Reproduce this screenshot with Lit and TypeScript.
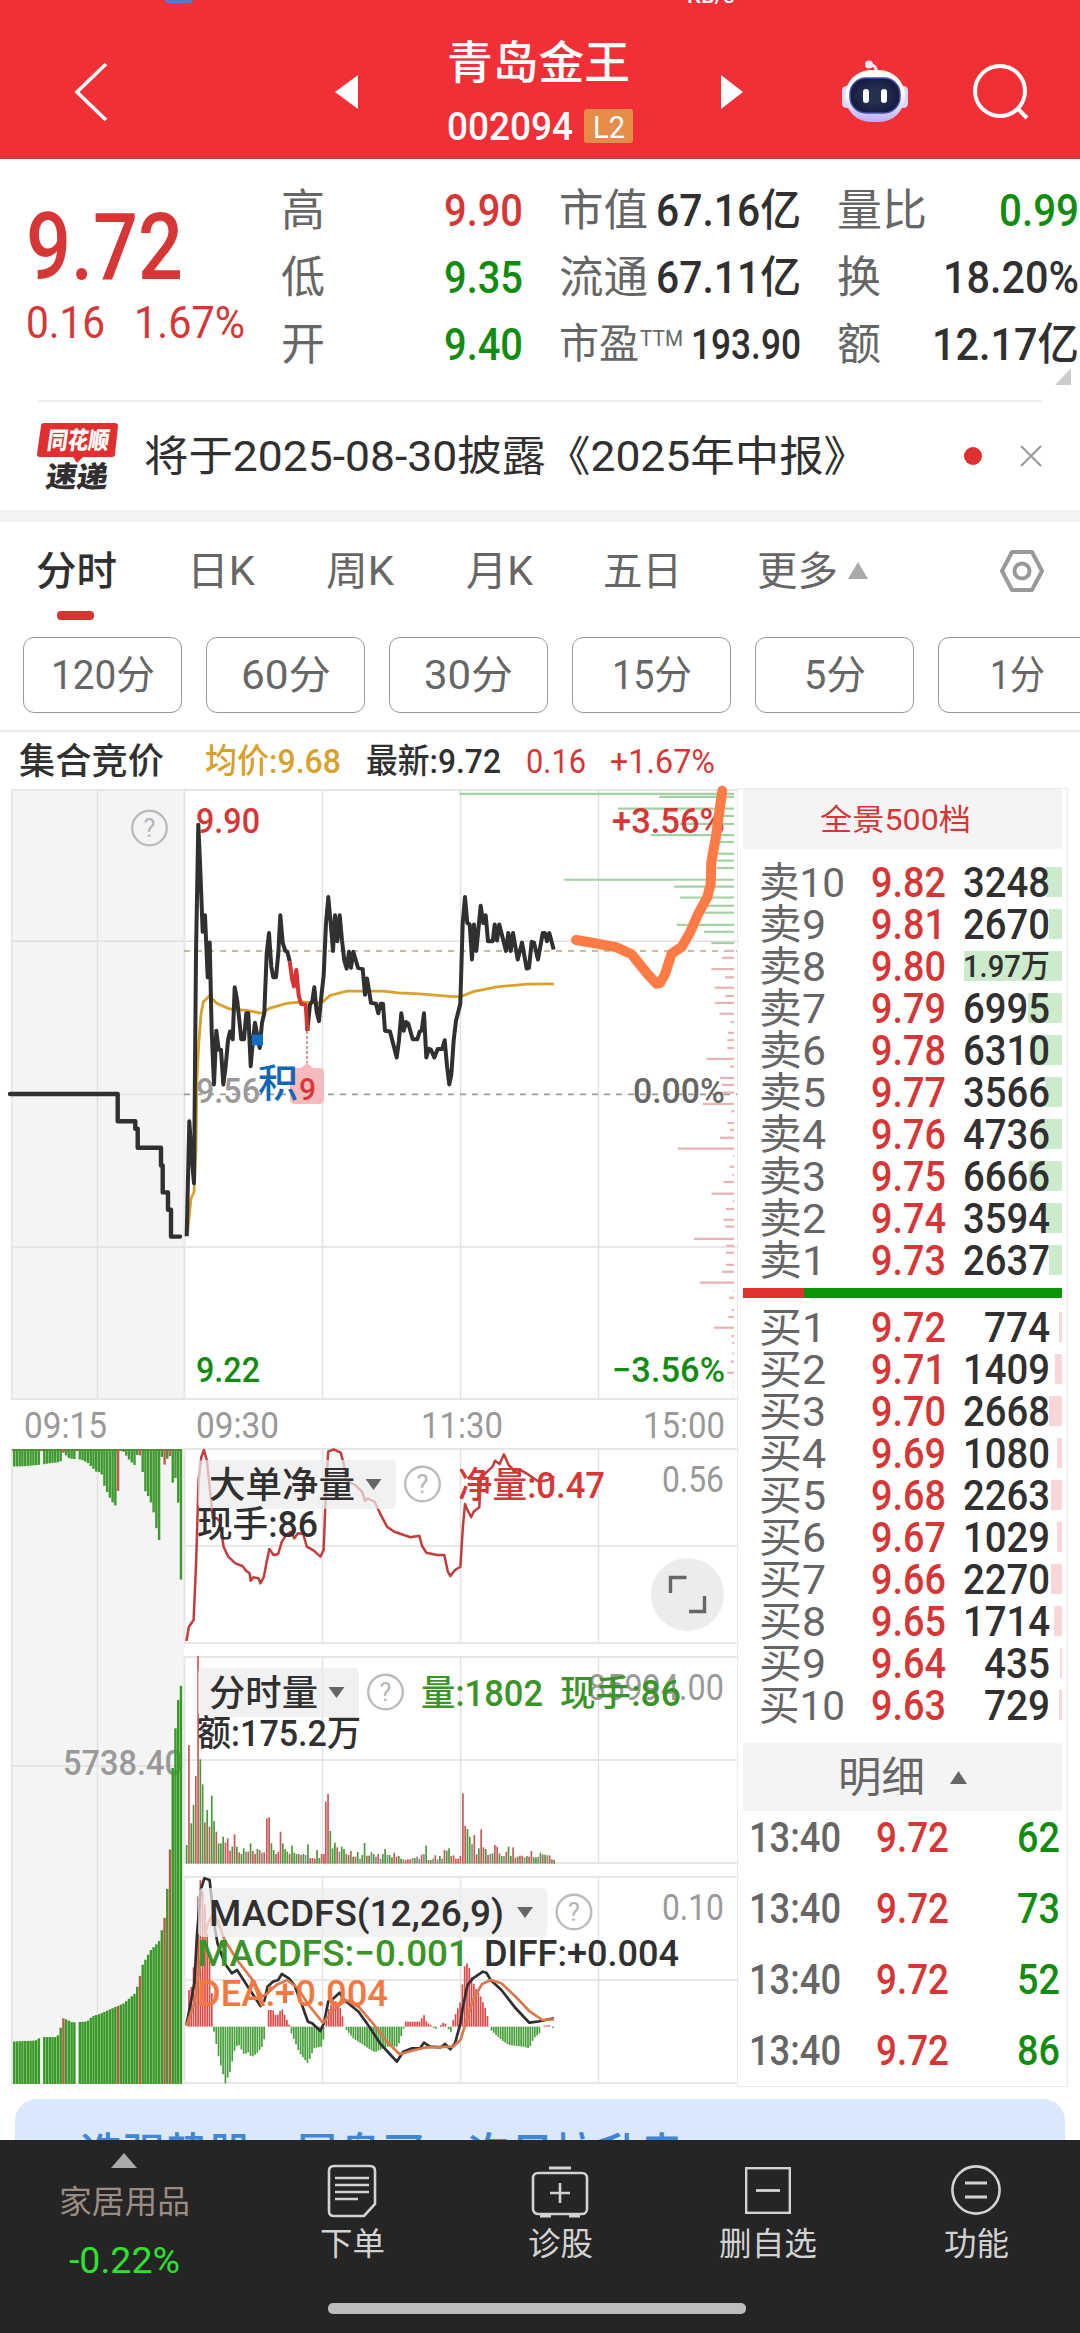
import { LitElement, html, svg, css } from "lit"
import { customElement } from "lit/decorators.js"

type Box = { ox: number, oy: number, kx: number, ky: number }

// chart plotting spaces, each one maps its own units to page units
const PRICE: Box = { ox: 0, oy: 780, kx: 3, ky: 2.306 }
const CALL: Box = { ox: 0, oy: 1430, kx: 3, ky: 2.306 }
const NET: Box = { ox: 180, oy: 1430, kx: 2.8, ky: 3 }
const VOL: Box = { ox: 180, oy: 1650, kx: 2.8, ky: 3 }

const PRICE_A = "560,1052 568,787 575,870 582,930 588,400 595,103 600,190 608,350 615,312 623,455 629,375 635,580 642,702 649,578 656,622 663,622 670,702 677,660 684,600 690,580 698,598 704,478 712,510 724,598 732,598 739,538 745,538 752,660 759,598 765,560 779,618 786,560 793,538 800,400 807,353 814,430 820,455 828,455 835,400 841,312 848,375 856,394 862,396 869,418"
const PRICE_RED = "869,418 876,458 882,476 889,438 896,497 903,516 917,518 922,578"
const PRICE_B = "922,578 930,518 937,510 943,478 950,535 957,556 964,500 971,450 978,330 985,270 992,330 999,394 1005,312 1012,372 1019,312 1026,370 1033,416 1040,435 1047,396 1053,433 1060,396 1074,433 1088,436 1095,495 1101,458 1113,514 1128,516 1135,538 1142,516 1149,516 1155,578 1170,580 1190,640 1197,600 1204,538 1211,578 1218,558 1225,562 1238,598 1252,598 1259,580 1265,578 1272,538 1279,640 1286,620 1293,622 1303,640 1313,620 1327,620 1334,600 1341,660 1348,702 1354,680 1361,600 1368,555 1381,516 1388,330 1395,270 1402,330 1409,333 1416,414 1422,333 1429,394 1442,290 1450,330 1457,312 1464,372 1478,372 1484,333 1491,370 1498,333 1518,394 1525,353 1532,394 1539,353 1553,414 1566,375 1580,435 1587,433 1595,373 1602,375 1614,414 1628,353 1635,353 1641,372 1648,353 1661,391"
const AVERAGE = "562,1050 573,965 582,950 588,850 590,700 597,600 603,540 610,512 628,498 650,515 690,528 740,531 785,538 810,526 860,515 900,512 965,514 990,497 1040,487 1150,487 1195,491 1260,493 1350,499 1381,500 1420,488 1490,477 1580,471 1661,470"
const AUCTION = "30,724 353,724 353,787 406,787 406,804 413,804 413,848 483,848 483,889 488,889 488,951 504,951 504,991 513,991 513,1053 540,1053"
const SKETCH = "1728,369 1790,377 1850,386 1895,402 1940,445 1970,470 1980,468 1995,448 2015,400 2045,385 2070,352 2095,308 2122,270 2132,240 2134,190 2148,130 2155,90 2167,25"
const ASK_DEPTH = "268,32 868,39 744,66 1040,83 930,101 842,127 1040,143 1040,170 1040,186 1040,203 581,230 912,246 930,271 1010,290 990,306 920,334 1002,350 1024,376"
const BID_DEPTH = "1070,394 1056,410 1024,436 1065,455 1034,479 1066,498 1034,514 1048,539 1082,558 1074,583 1072,600 1072,618 1009,643 1081,661 1050,687 1056,703 1049,721 998,747 1084,764 1072,791 1080,807 1050,825 924,850 1089,867 1078,892 1087,911 1060,927 1024,954 1089,971 1068,989 1061,1014 1066,1030 972,1058 1069,1074 1068,1090 1068,1118 1056,1134 990,1159 1090,1178 1077,1194 1086,1222 1075,1238 1032,1263 1084,1282 1087,1298 1087,1323 1083,1341 1072,1367 1090,1387 1090,1403 1090,1419"

const CALL_TOP = "38,84 60,84 120,80 150,76 178,74 183,50 205,66 240,68 260,76 285,96 300,98 310,130 325,155 335,168 350,180 352,48 365,48 385,70 402,82 405,50 412,68 420,50 428,135 445,158 455,180 465,225 479,272 482,47 492,88 500,60 508,60 515,125 520,100 530,138 537,345"
const CALL_BOTTOM = "38,1410 105,1408 120,1400 170,1400 180,1380 186,1356 200,1360 215,1366 260,1364 275,1352 300,1346 340,1332 370,1322 405,1298 415,1270 425,1235 450,1200 475,1180 485,1150 492,1125 499,1068 507,1003 515,800 522,710 529,655 537,590"

const NET_LINE = "18,633 25,590 38,570 45,400 52,150 60,80 67,60 75,90 83,170 92,265 103,265 112,275 122,350 135,380 155,400 175,408 185,422 195,430 198,452 205,442 220,445 225,460 235,440 242,400 250,357 262,375 275,372 285,335 297,315 310,305 320,325 330,310 345,312 355,350 375,362 393,380 402,360 408,200 415,65 430,58 450,68 458,100 465,150 490,165 510,185 518,213 525,205 545,215 560,250 580,290 600,305 645,322 670,317 678,348 690,368 720,375 740,375 750,425 757,438 770,420 785,410 792,290 798,222 805,240 815,262 822,245 838,232 842,150 855,130 875,110 882,92 895,102 907,73 920,105 930,115 935,125 950,118 970,130 990,145 1005,155 1030,150 1048,140"

const VOLUME = [
	{ x: 18.5, tops: [585, 285, 520, 465, 378, 18, 328, 403, 517, 480, 530, 437, 513, 545, 580, 580, 560, 578, 565, 602, 590, 553, 590, 607, 612, 595, 605, 605, 580, 603, 612, 597, 600, 608, 607], color: "grggrrggrgrggrgggrrrgrgrggkrgrrgrkr" },
	{ x: 243, tops: [505, 502, 580, 600, 612, 605, 545, 580, 597, 605, 612, 587, 608, 612, 612, 615, 612, 615, 583, 624, 624, 626, 600, 624, 612, 612], color: "rrggrrrgggrgggrkgkgrrrggrr" },
	{ x: 408, tops: [455, 432, 543, 595, 578, 592, 605, 590, 597, 612, 615, 603, 620, 620, 606, 626, 615, 579, 617, 617, 606, 612, 620, 612, 626, 612, 597, 615, 615, 622, 608, 620, 618, 626, 628, 630, 628, 628, 624, 624, 620, 626, 614, 612, 587, 630, 630, 626, 616, 628, 618, 626, 600, 602, 595, 618, 616, 626, 626, 618], color: "rrgggrkggrgrgrgkggrgkgkrkggkggrrggkrrrkgkkrkgrgkrkgkrggrrrrr" },
	{ x: 792, tops: [430, 527, 537, 560, 583, 555, 613, 595, 538, 592, 597, 615, 612, 610, 585, 590, 610, 618, 618, 605, 590, 618, 592, 623, 620, 617, 617, 622, 618, 620, 603, 622, 622, 620, 608, 614, 614, 616, 616, 628, 630], color: "rrggkrrgrrgrkgrrggkrggrrgrrkgrrggkgrgkrrg" }
]

const MACD_ZONES = [
	"25,1020 32,1010 38,950 45,880 51,728 57,690 64,728 70,765 76,850 82,900 90,1050",
	"95,1145 108,1220 127,1300 140,1265 155,1190 165,1185 180,1215 190,1205 200,1222 215,1210 230,1190 240,1150",
	"248,1080 260,1080 270,1100 285,1075 295,1100 306,1125",
	"312,1150 335,1210 358,1240 375,1195 395,1190 404,1160",
	"410,1110 415,1080 430,1050 445,1060 455,1100 461,1125",
	"466,1140 485,1165 520,1190 545,1207 580,1190 610,1190 626,1135",
	"632,1115 670,1115 683,1095 690,1115 705,1128",
	"710,1134 720,1137", "730,1125 740,1115 745,1126", "752,1138 760,1147",
	"765,1110 785,1055 792,990 798,940 805,940 810,955 818,990 830,1020 842,1040 855,1075 865,1115",
	"872,1142 900,1170 920,1185 960,1190 978,1195 990,1165 1012,1145",
	"1020,1127 1035,1125", "1044,1134 1050,1135"
]
const DIFF = "18,1125 30,1060 40,1000 48,850 58,720 68,685 83,690 90,760 97,830 105,880 115,910 125,940 145,970 160,960 172,980 190,1010 225,1068 237,1050 245,1010 260,995 275,990 285,972 305,985 320,1005 340,1060 358,1115 370,1120 393,1143 403,1120 415,1055 430,1045 447,1028 460,1050 500,1085 530,1130 560,1180 590,1215 607,1235 625,1205 650,1195 672,1195 683,1178 700,1190 730,1192 742,1182 757,1198 770,1180 785,1120 792,1070 805,1005 820,985 848,965 858,968 870,990 900,1020 940,1075 978,1118 1000,1115 1047,1105"
const DEA = "18,1128 40,1060 58,930 75,830 90,795 105,810 125,870 160,930 200,985 230,1040 245,1030 270,1005 300,990 330,1015 360,1065 400,1118 430,1080 465,1050 500,1070 540,1120 580,1175 615,1213 650,1202 690,1192 765,1190 785,1170 800,1120 820,1050 845,1003 870,990 900,1000 940,1040 980,1085 1015,1110 1047,1108"

const parse = (s: string) => s.split(" ").map(p => p.split(",").map(Number))
const px = (b: Box, x: number) => b.ox + x / b.kx
const py = (b: Box, y: number) => b.oy + y / b.ky
const line = (b: Box, s: string) => parse(s).map(([x, y]) => `${px(b, x).toFixed(1)},${py(b, y).toFixed(1)}`).join(" ")

// linear interpolation over a list of points
const at = (pts: number[][], x: number) => {
	for (let i = 1; i < pts.length; i++) {
		const [x0, y0] = pts[i - 1]
		const [x1, y1] = pts[i]
		if (x <= x1) return y0 + (y1 - y0) * (x - x0) / (x1 - x0)
	}
	return pts[pts.length - 1][1]
}

// text squeezed or stretched to a given width
const fit = (text: string, width: number, size: number, cls = "") => html`
	<svg class="fit ${cls}" width=${width} height=${size}>
		<text x="-1" y=${size * 0.856} font-size=${size} textLength=${width + 2} lengthAdjust="spacingAndGlyphs">${text}</text>
	</svg>`

const label = (text: string, x: number, y: number, width: number, size: number, cls: string) => svg`
	<text class=${cls} x=${x - 1} y=${y} font-size=${size} textLength=${width + 2} lengthAdjust="spacingAndGlyphs">${text}</text>`

const fontStyles = css`
:host {
	font-family: Roboto, "Noto Sans CJK SC", sans-serif;
}

svg {
	display: block;
	overflow: visible;
	flex: none;
}

text { fill: currentColor; }

.red { color: #d63636; }
.green { color: #118c11; }
.dark { color: #303030; }
.gray { color: #666; }
.light { color: #999; }
.medium { font-weight: 500; }
`

@customElement("stock-header")
export class StockHeader extends LitElement {
	static styles = [fontStyles, css`
:host {
	display: block;
	height: 158px;
	background: #f12f37;
	color: #fff;
	border-bottom: 1px solid #b5474c;
	overflow: hidden;
}

.status {
	display: flex;
	height: 26px;
}

.chip {
	width: 28px;
	height: 3px;
	margin-left: 165px;
	background: #6573cf;
	border-radius: 0 0 6px 6px;
}

.speed {
	margin: -18px 0 0 494px;
	height: 26px;
	font-size: 22px;
	line-height: 27px;
	font-weight: 500;
}

.bar {
	display: flex;
	align-items: center;
	height: 132px;
}

.back { margin-left: 75px; }
.prev { margin-left: 228px; }
.next { margin-left: 88px; }
.bot { margin-left: 99px; }
.search { margin-left: 65px; }

.name {
	width: 185px;
	margin-left: 90px;
	padding-top: 4px;
}

.line {
	display: flex;
	align-items: center;
	height: 64px;
	gap: 12px;
}

.badge {
	display: flex;
	align-items: center;
	justify-content: center;
	width: 50px;
	height: 34px;
	border-radius: 3px;
	background: #e58c48;
}
`]

	render() {
		return html`
			<div class="status"><div class="chip"></div><div class="speed">KB/s</div></div>
			<div class="bar">
				<svg class="back" width="32" height="58"><polyline points="31,1 2,29 31,57" fill="none" stroke="#fff" stroke-width="3.6"/></svg>
				<svg class="prev" width="23" height="34"><path d="M23 0v34L0 17z" fill="#fff"/></svg>
				<div class="name">
					<div class="line">${fit("青岛金王", 181, 45, "medium")}</div>
					<div class="line">${fit("002094", 124, 39, "medium")}<div class="badge">${fit("L2", 30, 31)}</div></div>
				</div>
				<svg class="next" width="22" height="34"><path d="M0 0v34L22 17z" fill="#fff"/></svg>
				${this.createBot()}
				<svg class="search" width="56" height="56" fill="none" stroke="#fff" stroke-width="4"><circle cx="27" cy="27" r="25"/><path d="M44 44l10 10"/></svg>
			</div>
		`
	}

	createBot() {
		return html`
			<svg class="bot" width="66" height="62" viewBox="0 0 66 62">
				<defs>
					<linearGradient id="shell" x1="0" y1="0" x2="0" y2="1"><stop offset=".45" stop-color="#fff"/><stop offset="1" stop-color="#b9aef5"/></linearGradient>
					<radialGradient id="face"><stop offset=".4" stop-color="#24304f"/><stop offset="1" stop-color="#161c42"/></radialGradient>
				</defs>
				<path d="M34 13c1-6-1-9-6-9" fill="none" stroke="#f5e6f3" stroke-width="3"/>
				<circle cx="27" cy="3.500" r="4" fill="#f9e9f0"/>
				<rect x="0" y="25" width="9" height="22" rx="4.500" fill="#d8d8fa"/>
				<rect x="57" y="25" width="9" height="22" rx="4.500" fill="#d8d8fa"/>
				<rect x="3" y="9" width="60" height="52" rx="26" fill="url(#shell)"/>
				<rect x="8" y="17" width="50" height="35" rx="16" fill="url(#face)" stroke="#4350a8" stroke-width="1.5"/>
				<rect x="21" y="28" width="6" height="14" rx="3" fill="#fff"/>
				<rect x="39" y="28" width="6" height="14" rx="3" fill="#fff"/>
			</svg>`
	}
}

@customElement("stock-quote")
export class StockQuote extends LitElement {
	static styles = [fontStyles, css`
:host {
	display: block;
	background: #fff;
}

.quote {
	display: grid;
	grid-template-columns: 217px 240px 240px 240px;
	column-gap: 38px;
	padding: 17px 0 0 27px;
	height: 224px;
	box-sizing: border-box;
}

.last { padding-top: 24px; }

.change {
	display: flex;
	gap: 31px;
	margin-top: 7px;
}

.row {
	display: flex;
	align-items: center;
	justify-content: space-between;
	height: 67px;
}

.pe {
	display: flex;
	align-items: flex-start;
	gap: 3px;
}

.pe .ttm { margin-top: 4px; }

.fold {
	display: flex;
	justify-content: flex-end;
	height: 17px;
	padding: 0 9px 0 0;
	margin-top: -15px;
}

.news {
	display: flex;
	align-items: center;
	height: 108px;
	margin: 15px 37px 0;
	border-top: 2px solid #eee;
}

.title { margin-left: 27px; }

.dot {
	flex: none;
	width: 18px;
	height: 18px;
	margin-left: 97px;
	border-radius: 50%;
	background: #e02f2f;
}

.close { margin-left: 38px; }

.band {
	height: 12px;
	background: #f3f3f3;
}

.logo { color: #fff; }
`]

	render() {
		return html`
			<div class="quote">
				<div>
					<div class="last">${fit("9.72", 155, 92, "red medium")}</div>
					<div class="change">${fit("0.16", 77, 45, "red")}${fit("1.67%", 109, 45, "red")}</div>
				</div>
				<div>
					<div class="row">${fit("高", 42, 44, "gray")}${fit("9.90", 77, 45, "red medium")}</div>
					<div class="row">${fit("低", 42, 44, "gray")}${fit("9.35", 77, 45, "green medium")}</div>
					<div class="row">${fit("开", 42, 44, "gray")}${fit("9.40", 77, 45, "green medium")}</div>
				</div>
				<div>
					<div class="row">${fit("市值", 87, 44, "gray")}${fit("67.16亿", 143, 44, "dark medium")}</div>
					<div class="row">${fit("流通", 87, 44, "gray")}${fit("67.11亿", 143, 44, "dark medium")}</div>
					<div class="row"><div class="pe">${fit("市盈", 78, 41, "gray")}<div class="ttm">${fit("TTM", 41, 22, "gray")}</div></div>${fit("193.90", 108, 43, "dark medium")}</div>
				</div>
				<div>
					<div class="row">${fit("量比", 88, 44, "gray")}${fit("0.99", 78, 45, "green medium")}</div>
					<div class="row">${fit("换", 42, 44, "gray")}${fit("18.20%", 134, 45, "dark medium")}</div>
					<div class="row">${fit("额", 42, 44, "gray")}${fit("12.17亿", 145, 44, "dark medium")}</div>
				</div>
			</div>
			<div class="fold"><svg width="16" height="17"><path d="M16 0v17H0z" fill="#ccc"/></svg></div>
			<div class="news">
				<svg class="logo" width="81" height="68" viewBox="0 0 81 68">
					<path d="M7 1h71q3 0 3 3l-3 28q0 3-3 3H46l-6 6-4-6H3q-3 0-3-3L4 4q0-3 3-3z" fill="#e12f30"/>
					<g font-weight="900" transform="skewX(-8)">
						<text x="13" y="27" font-size="24" textLength="62" lengthAdjust="spacingAndGlyphs">同花顺</text>
						<text x="17" y="65" font-size="29" textLength="62" lengthAdjust="spacingAndGlyphs" class="dark">速递</text>
					</g>
				</svg>
				<div class="title">${fit("将于2025-08-30披露《2025年中报》", 722, 42, "dark")}</div>
				<div class="dot"></div>
				<svg class="close" width="22" height="22"><path d="M1 1l20 20M21 1L1 21" stroke="#999" stroke-width="2"/></svg>
			</div>
			<div class="band"></div>
		`
	}
}

@customElement("period-tabs")
export class PeriodTabs extends LitElement {
	static styles = [fontStyles, css`
:host {
	display: block;
	overflow: hidden;
}

.tabs {
	display: flex;
	height: 98px;
	padding: 0 36px 0 37px;
}

.tabs > * { margin-top: 29px; }

.current {
	display: flex;
	flex-direction: column;
	gap: 20px;
	width: 78px;
	margin-right: 73px;
}

.current i {
	width: 37px;
	height: 9px;
	margin-left: 20px;
	border-radius: 4px;
	background: #df3030;
}

.tabs .more { margin-left: 11px; margin-top: 40px; }
.tabs .set { margin-left: 132px; margin-top: 27px; }

.pills {
	display: flex;
	gap: 24px;
	width: 1100px;
	padding: 17px 0 17px 23px;
	border-bottom: 2px solid #e8e8e8;
}

.pill {
	display: flex;
	align-items: center;
	justify-content: center;
	flex: none;
	box-sizing: border-box;
	width: 159px;
	height: 76px;
	border: 1.5px solid #999;
	border-radius: 11px;
}
`]

	render() {
		const pills: [string, number][] = [["120分", 102], ["60分", 88], ["30分", 87], ["15分", 78], ["5分", 60], ["1分", 53]]
		return html`
			<div class="tabs">
				<div class="current">${fit("分时", 79, 40, "dark medium")}<i></i></div>
				${fit("日K", 66, 40, "gray")}
				<span style="width:74px"></span>${fit("周K", 66, 40, "gray")}
				<span style="width:74px"></span>${fit("月K", 65, 40, "gray")}
				<span style="width:73px"></span>${fit("五日", 77, 40, "gray")}
				<span style="width:78px"></span>${fit("更多", 79, 40, "gray")}
				<svg class="more" width="20" height="17"><path d="M10 0L20 17H0z" fill="#aaa"/></svg>
				<svg class="set" width="44" height="44" fill="none" stroke="#999" stroke-width="4" stroke-linejoin="round"><path d="M12 3h20l10 19-10 19H12L2 22z"/><circle cx="22" cy="22" r="7.5"/></svg>
			</div>
			<div class="pills">${pills.map(([t, w]) => html`<div class="pill">${fit(t, w, 40, "gray")}</div>`)}</div>
		`
	}
}

@customElement("stock-charts")
export class StockCharts extends LitElement {
	static styles = [fontStyles, css`
:host { display: block; }

.grid { stroke: #e0e0e0; stroke-width: 1.4; fill: none; }
.frame { stroke: #e6e6e6; stroke-width: 2; fill: none; }
.price { fill: none; stroke: #303030; stroke-width: 4; stroke-linejoin: round; }
.call { stroke-width: 4.4; stroke-linecap: round; }
.up { stroke: #d83434; }
.avg { fill: none; stroke: #d8a12c; stroke-width: 2.8; }
.net { fill: none; stroke: #c23c3c; stroke-width: 2.5; stroke-linejoin: round; }
.diff { stroke-width: 2.7; }
.dea { stroke-width: 2.7; stroke: #d9794c; }
.chip { fill: #ececec; fill-opacity: .72; }
.help { fill: #b4b4b4; }
.blue { color: #1167b5; }
.leaf { color: #3b9427; }
.orange { color: #f27842; }
.r { fill: #c85a5a; }
.g { fill: #4a9a3c; }
.k { fill: #8a8a8a; }
`]

	render() {
		return html`
			<svg width="737" height="1299" viewBox="0 788 737 1299">
				${this.createGrid()}
				${this.createPrice()}
				${this.createAuction()}
				${this.createNet()}
				${this.createVolume()}
				${this.createMacd()}
			</svg>
		`
	}

	createGrid() {
		const panels = [[790, 1399], [1449, 1643], [1657, 1863], [1877, 2083]]
		return svg`
			<rect x="11" y="790" width="173" height="609" fill="#f4f4f4"/>
			<rect x="11" y="1449" width="173" height="635" fill="#f4f4f4"/>
			<path class="grid" d="M97.5 790V1399M97.5 1449V2084M11 1766H184M11 941.3H737M11 1094.4H184M11 1247H737M184 1546H737M184 1760H737M184 1980H737"/>
			<path class="frame" d="M12 1399V790H737M11 1399H737M12 1449V2084"/>
			${panels.map(([a, b]) => svg`
				<path class="grid" d="M322.5 ${a}V${b}M460.5 ${a}V${b}M598.5 ${a}V${b}"/>
				<path class="frame" d="M184.5 ${a}V${b}M184 ${a}H737M184 ${b}H737"/>`)}
			<path d="M184 951H737" stroke="#b9a67c" stroke-width="1.6" stroke-dasharray="6 6"/>
			<path d="M184 1094.4H737" stroke="#999" stroke-width="1.6" stroke-dasharray="6 6"/>
		`
	}

	createHelp(x: number, y: number) {
		return svg`
			<circle cx=${x} cy=${y} r="17.3" fill="none" stroke="#bbb" stroke-width="2.4"/>
			<text class="help" x=${x} y=${y + 9} font-size="25" text-anchor="middle">?</text>`
	}

	createPrice() {
		const depth = (s: string, color: string) => parse(s).map(([x, y]) => svg`
			<path d="M${370 + x / 3} ${py(PRICE, y)}H734" stroke=${color} stroke-width="2.2"/>`)
		return svg`
			${depth(ASK_DEPTH, "#a2d2a2")}
			${depth(BID_DEPTH, "#e9b3b3")}
			${label("9.56", 197, 1103, 62, 35, "light medium")}
			<polyline class="avg" points=${line(PRICE, AVERAGE)}/>
			<polyline class="price" points=${line(PRICE, PRICE_A)}/>
			<polyline class="price" points=${line(PRICE, PRICE_B)}/>
			<polyline class="price up" points=${line(PRICE, PRICE_RED)}/>
			<polyline class="price call" points=${line(PRICE, AUCTION)}/>
			<path d="M307 1031V1063" stroke="#c46a6a" stroke-width="1.4" stroke-dasharray="3 2"/>
			<path d="M295 1068h6l6-5 6 5h6q5 0 5 5v26q0 5-5 5h-24q-5 0-5-5v-26q0-5 5-5z" fill="#f6babc"/>
			${label("9", 300, 1100, 15, 31, "red medium")}
			<rect x="252" y="1034.5" width="11" height="11" fill="#1470c4"/>
			${label("积", 259, 1097, 38, 39, "blue medium")}
			${this.createHelp(149.5, 828)}
			${label("9.90", 197, 833, 62, 35, "red medium")}
			${label("9.22", 197, 1382, 62, 35, "green medium")}
			${label("+3.56%", 613, 833, 111, 35, "red medium")}
			${label("0.00%", 634, 1103, 90, 35, "gray medium")}
			${label("−3.56%", 613, 1382, 111, 35, "green medium")}
			${label("09:15", 25, 1438, 81, 36, "light")}
			${label("09:30", 197, 1438, 81, 36, "light")}
			${label("11:30", 422, 1438, 80, 36, "light")}
			${label("15:00", 644, 1438, 80, 36, "light")}
			<polyline points=${line(PRICE, SKETCH)} fill="none" stroke="#ff7b45" stroke-width="10" stroke-linecap="round" stroke-linejoin="round"/>
		`
	}

	createAuction() {
		const top = parse(CALL_TOP)
		const bottom = parse(CALL_BOTTOM)
		const bars = []
		for (let x = 39; x < 540; x += 8.2) {
			if (Math.abs(x - 125) < 4 || Math.abs(x - 225) < 4) continue
			const red = [187, 354, 414, 492, 507].some(v => Math.abs(v - x) < 4.1)
			const h = at(top, x)
			const l = at(bottom, x + 2)
			bars.push(svg`
				<rect x=${x / 3} y="1449" width="2.45" height=${py(CALL, h) - 1449} fill=${red ? "#c25a50" : "#3f9a30"}/>
				<rect x=${x / 3} y=${py(CALL, l)} width="2.45" height=${2084 - py(CALL, l)} fill=${red ? "#ad6140" : "#3a9a28"}/>`)
		}
		return svg`
			${label("5738.40", 64, 1775, 118, 35, "light medium")}
			<rect x="12" y="1449" width="168" height="2" fill="#9a6a50"/>
			${bars}
		`
	}

	createChip(x2: number, y: number) {
		return svg`
			<rect class="chip" x="198" y=${y} width=${x2 - 198} height="49" rx="5"/>
			<path d="M${x2 - 30.5} ${y + 19}h16l-8 11z" fill="#666"/>
			${this.createHelp(x2 + 26.5, y + 24)}`
	}

	createNet() {
		return svg`
			<polyline class="net" points=${line(NET, NET_LINE)}/>
			${this.createChip(396, 1460)}
			${label("大单净量", 210, 1498, 144, 36, "dark medium")}
			${label("净量:0.47", 459, 1498, 145, 36, "red medium")}
			${label("0.56", 663, 1492, 60, 36, "light")}
			${label("现手:86", 198, 1537, 119, 36, "dark medium")}
			<circle cx="687.5" cy="1594.5" r="36.5" fill="#ececec"/>
			<path d="M670.5 1593V1577.5H686.5M704.5 1596V1611.5H689" fill="none" stroke="#666" stroke-width="3.4"/>
		`
	}

	createVolume() {
		return svg`
			${VOLUME.map(seg => seg.tops.map((t, i) => svg`
				<rect class=${seg.color[i] || "g"} x=${px(VOL, seg.x + i * 6.39) - 0.8} y=${py(VOL, t)} width="1.7" height=${1863.6 - py(VOL, t)}/>`))}
			${this.createChip(359, 1668)}
			${label("分时量", 210, 1706, 107, 36, "dark medium")}
			${label("85994.00", 589, 1700, 134, 36, "light")}
			${label("量:1802", 422, 1706, 120, 36, "leaf medium")}
			${label("现手:86", 561, 1706, 119, 36, "leaf medium")}
			${label("额:175.2万", 198, 1746, 162, 36, "dark medium")}
		`
	}

	createMacd() {
		const bars = MACD_ZONES.map(zone => {
			const pts = parse(zone)
			const out = []
			for (let x = pts[0][0]; x <= pts[pts.length - 1][0]; x += 6.39) {
				const y = at(pts, x)
				out.push(svg`<rect x=${px(VOL, x) - 0.8} y=${py(VOL, Math.min(y, 1130))} width="1.7" height=${Math.abs(y - 1130) / 3} fill=${y < 1130 ? "#e04848" : "#479f3b"}/>`)
			}
			return out
		})
		return svg`
			${bars}
			<polyline class="price diff" points=${line(VOL, DIFF)}/>
			<polyline class="price dea" points=${line(VOL, DEA)}/>
			${this.createChip(547.5, 1888)}
			${label("MACDFS(12,26,9)", 210, 1926, 293, 37, "dark medium")}
			${label("0.10", 663, 1920, 60, 36, "light")}
			${label("MACDFS:−0.001", 198, 1966, 270, 37, "leaf medium")}
			${label("DIFF:+0.004", 485, 1966, 193, 37, "dark medium")}
			${label("DEA:+0.004", 198, 2006, 189, 37, "orange medium")}
		`
	}
}

@customElement("order-book")
export class OrderBook extends LitElement {
	static styles = [fontStyles, css`
:host {
	display: block;
	box-sizing: border-box;
	width: 331px;
	height: 1299px;
	padding: 0 5px;
	border: 1px solid #eaeaea;
	background: #fff;
}

.head {
	display: flex;
	align-items: center;
	justify-content: center;
	height: 60px;
	margin-bottom: 12px;
	padding-right: 14px;
	background: #f4f4f4;
}

.row {
	display: grid;
	grid-template-columns: 112px 92px 98px;
	align-items: center;
	height: 42px;
	padding-left: 17px;
}

.amount {
	display: grid;
	align-items: center;
	justify-items: end;
}

.amount > * { grid-area: 1 / 1; }
.amount .fit { margin-right: 13px; }

.bar { height: 30px; }
.sell .bar { background: #cdeacd; }
.buy .bar { background: #f6d6d6; }

.ratio {
	display: flex;
	height: 10px;
	margin: 7px 0 8px;
	background: linear-gradient(to right, #e23131 61px, #0a950a 61px);
}

.detail {
	height: 68px;
	margin: 17px 0 0;
	gap: 26px;
	padding-right: 0;
}

.trade {
	display: grid;
	grid-template-columns: 127px 1fr auto;
	align-items: center;
	height: 71px;
	padding: 0 3px 0 7px;
}

.trades { margin-top: -10px; }
`]

	sells: [string, string, number][] = [["10", "3248", 16], ["9", "2670", 13], ["8", "1.97万", 98], ["7", "6995", 34], ["6", "6310", 31], ["5", "3566", 17], ["4", "4736", 23], ["3", "6666", 33], ["2", "3594", 17], ["1", "2637", 13]]
	buys: [string, string, number][] = [["1", "774", 3], ["2", "1409", 7], ["3", "2668", 13], ["4", "1080", 5], ["5", "2263", 11], ["6", "1029", 5], ["7", "2270", 11], ["8", "1714", 8], ["9", "435", 2], ["10", "729", 3]]

	render() {
		return html`
			<div class="head">${fit("全景500档", 149, 30, "red")}</div>
			<div class="sell">${this.sells.map((r, i) => this.createRow("卖", r, 982 - i))}</div>
			<div class="ratio"></div>
			<div class="buy">${this.buys.map((r, i) => this.createRow("买", r, 972 - i))}</div>
			<div class="head detail">${fit("明细", 85, 42, "gray")}<svg width="17" height="13"><path d="M8.5 0L17 13H0z" fill="#666"/></svg></div>
			<div class="trades">
				${["62", "73", "52", "86"].map(n => html`
					<div class="trade">${fit("13:40", 90, 42, "gray medium")}${fit("9.72", 71, 42, "red medium")}${fit(n, 41, 42, "green medium")}</div>`)}
			</div>
		`
	}

	createRow(side: string, [level, amount, width]: [string, string, number], price: number) {
		const wide = amount.includes("万")
		return html`
			<div class="row">
				${fit(side + level, level.length > 1 ? 84 : 65, 41, "gray")}
				${fit((price / 100).toFixed(2), 73, 42, "red medium")}
				<div class="amount">
					<div class="bar" style="width:${width}px"></div>
					${fit(amount, wide || amount.length > 3 ? 85 : 64, wide ? 32 : 42, "dark medium")}
				</div>
			</div>`
	}
}

@customElement("bottom-nav")
export class BottomNav extends LitElement {
	static styles = [fontStyles, css`
:host {
	display: block;
	height: 193px;
	background: #252525;
	color: #d2d2d2;
}

.items {
	display: grid;
	grid-template-columns: 248px repeat(4, 208px);
	height: 163px;
}

.item, .sector {
	display: flex;
	flex-direction: column;
	align-items: center;
}

.item { padding-top: 24px; gap: 10px; }
.sector { padding-top: 13px; }
.sector .name { color: #9b8c82; margin: 18px 0 24px; }
.sector .drop { color: #2fe12f; }

.home {
	width: 418px;
	height: 11px;
	margin-left: 328px;
	border-radius: 5px;
	background: #bdbdbd;
}
`]

	render() {
		return html`
			<div class="items">
				<div class="sector">
					<svg width="26" height="15"><path d="M13 0L26 15H0z" fill="#aaa"/></svg>
					<div class="name">${fit("家居用品", 129, 32)}</div>
					<div class="drop">${fit("-0.22%", 109, 36)}</div>
				</div>
				<div class="item">
					<svg width="50" height="54" fill="none" stroke="#d2d2d2" stroke-width="2.6"><path d="M7 2h36q5 0 5 5v33L37 52H7q-5 0-5-5V7q0-5 5-5zM8 14h34M8 21h34M8 28h34M8 35h23"/></svg>
					${fit("下单", 63, 32)}
				</div>
				<div class="item">
					<svg width="58" height="54" fill="none" stroke="#d2d2d2" stroke-width="2.6"><path d="M18 4h22" stroke-width="3"/><rect x="2" y="9" width="54" height="41" rx="5"/><path d="M29 19v20M19 29h20"/><path d="M9 51.5h11M38 51.5h11" stroke-width="4"/></svg>
					${fit("诊股", 63, 32)}
				</div>
				<div class="item">
					<svg width="46" height="54" fill="none" stroke="#d2d2d2" stroke-width="2.4"><rect x="1.2" y="4.2" width="43.6" height="44.6"/><path d="M11 26.5h24" stroke-width="2.8"/></svg>
					${fit("删自选", 96, 32)}
				</div>
				<div class="item">
					<svg width="50" height="54" fill="none" stroke="#d2d2d2" stroke-width="2.6"><circle cx="25" cy="26" r="23.6"/><path d="M14 19h22M14 33h22" stroke-width="2.8"/></svg>
					${fit("功能", 63, 32)}
				</div>
			</div>
			<div class="home"></div>
		`
	}
}

@customElement("app-root")
export class AppRoot extends LitElement {
	static styles = [fontStyles, css`
:host {
	display: block;
	width: 1080px;
	height: 2333px;
	overflow: hidden;
	background: #fff;
}

.info {
	display: flex;
	align-items: center;
	box-sizing: border-box;
	height: 56px;
	padding: 2px 0 0 20px;
}

.info .avg { color: #d8a12c; margin: 0 27px 0 43px; }
.info .diff { margin: 0 26px 0 27px; }

.market { display: flex; }

.banner {
	box-sizing: border-box;
	height: 41px;
	margin: 12px 15px 0;
	padding: 33px 0 0 66px;
	border-radius: 22px 22px 0 0;
	background: #dae8fb;
	color: #3f86d4;
	overflow: hidden;
}
`]

	render() {
		return html`
			<stock-header></stock-header>
			<stock-quote></stock-quote>
			<period-tabs></period-tabs>
			<div class="info">
				${fit("集合竞价", 143, 36, "dark medium")}
				${fit("均价:9.68", 134, 34, "avg medium")}
				${fit("最新:9.72", 133, 34, "dark medium")}
				${fit("0.16", 58, 34, "red diff")}
				${fit("+1.67%", 103, 34, "red")}
			</div>
			<div class="market">
				<stock-charts></stock-charts>
				<order-book></order-book>
			</div>
			<div class="banner">${fit("选强势股，尾盘买，次日拉升卖", 601, 43, "medium")}</div>
			<bottom-nav></bottom-nav>
		`
	}
}
